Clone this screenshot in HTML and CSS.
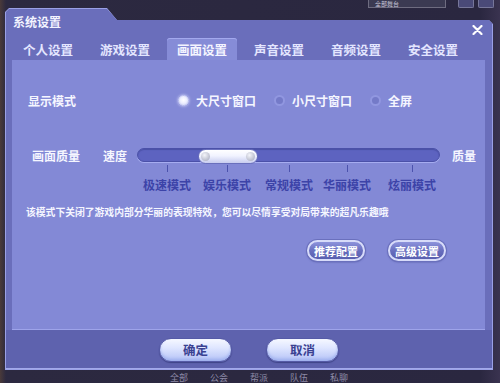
FILE: index.html
```html
<!DOCTYPE html>
<html lang="zh-CN">
  <head>
    <meta charset="UTF-8" />
    <meta name="viewport" content="width=device-width, initial-scale=1.0" />
    <title>系统设置</title>
    <link rel="stylesheet" href="styles.css">
  </head>
  <body>
    <div class="top-strip">
      <span class="stage-tag">全部舞台</span>
      <span class="corner-btn"></span>
      <span class="corner-btn"></span>
    </div>

    <div class="dialog-edge">
      <div class="dialog">
        <div class="title-bar">
          <span class="title">系统设置</span>
          <svg class="close" width="11" height="10" viewBox="0 0 11 10">
            <path d="M1.5 1 L9.5 9 M9.5 1 L1.5 9" stroke="#fff" stroke-width="2.2" stroke-linecap="round" />
          </svg>
        </div>

        <div class="tabs">
          <div class="tab">个人设置</div>
          <div class="tab">游戏设置</div>
          <div class="tab active">画面设置</div>
          <div class="tab">声音设置</div>
          <div class="tab">音频设置</div>
          <div class="tab">安全设置</div>
        </div>

        <!-- 画面设置 panel -->
        <div class="panel">
          <div class="row display-row">
            <span class="row-label">显示模式</span>
            <div class="radios">
              <label class="radio checked"><span class="dot"></span>大尺寸窗口</label>
              <label class="radio"><span class="dot"></span>小尺寸窗口</label>
              <label class="radio"><span class="dot"></span>全屏</label>
            </div>
          </div>

          <div class="row quality-row">
            <span class="row-label quality-label">画面质量</span>
            <span class="end-label">速度</span>
            <div class="track">
              <div class="thumb"><span class="knob"></span><span class="knob"></span></div>
            </div>
            <span class="end-label">质量</span>
          </div>

          <div class="marks">
            <div class="mark"><span class="tick"></span>极速模式</div>
            <div class="mark"><span class="tick"></span>娱乐模式</div>
            <div class="mark"><span class="tick"></span>常规模式</div>
            <div class="mark"><span class="tick"></span>华丽模式</div>
            <div class="mark"><span class="tick"></span>炫丽模式</div>
          </div>

          <p class="desc">该模式下关闭了游戏内部分华丽的表现特效，您可以尽情享受对局带来的超凡乐趣哦</p>

          <div class="panel-actions">
            <button class="btn-small">推荐配置</button>
            <button class="btn-small">高级设置</button>
          </div>
        </div>

        <div class="footer">
          <button class="btn-main">确定</button>
          <button class="btn-main">取消</button>
        </div>
      </div>
    </div>

    <div class="chat-tabs">
      <span>全部</span>
      <span>公会</span>
      <span>帮派</span>
      <span>队伍</span>
      <span>私聊</span>
    </div>
  </body>
</html>
```

FILE: styles.css
```css
body {
  margin: 0;
  width: 500px;
  height: 383px;
  overflow: hidden;
  background: linear-gradient(90deg, #4a3a3a 0, #2c2940 6px, #2a2740 480px, #3a3350 500px);
  font-family: "Noto Sans CJK SC", "Noto Sans", sans-serif;
}

/* game ui peeking above the dialog */
.top-strip {
  height: 8px;
  display: flex;
  justify-content: flex-end;
  gap: 4px;
  padding-right: 6px;
  overflow: hidden;
}

.stage-tag {
  width: 78px;
  height: 8px;
  margin-right: 8px;
  background: #3b3a52;
  border: 1px solid #6e6c80;
  border-top: none;
  color: #c9c6d8;
  font-size: 6px;
  line-height: 7px;
  padding-left: 6px;
  box-sizing: border-box;
}

.corner-btn {
  width: 16px;
  height: 8px;
  background: #4a4a78;
  border: 1px solid #77779a;
  border-top: none;
  border-radius: 0 0 2px 2px;
  box-sizing: border-box;
}

/* Dialog frame */
.dialog-edge {
  margin-left: 5px;
  width: 488px;
  height: 362px;
  padding: 1px;
  box-sizing: border-box;
  background: #9aa0e6;
  clip-path: polygon(0 4px, 4px 0, 102px 0, 112px 12px, calc(100% - 4px) 12px, 100% 16px, 100% 100%, 0 100%);
}

.dialog {
  height: 100%;
  display: flex;
  flex-direction: column;
  background: #6a6ebb;
  clip-path: polygon(0 3px, 3px 0, 101px 0, 111px 11px, calc(100% - 3px) 11px, 100% 14px, 100% 100%, 0 100%);
}

.title-bar {
  height: 29px;
  display: flex;
  justify-content: space-between;
  flex-shrink: 0;
}

.title {
  padding: 5px 0 0 7px;
  color: #f2f3ff;
  font-size: 12px;
  font-weight: 700;
  line-height: 16px;
}

.close {
  margin: 16px 9px 0 0;
}

.tabs {
  height: 22px;
  display: flex;
  gap: 7px;
  padding-left: 7px;
  flex-shrink: 0;
}

.tab {
  width: 70px;
  text-align: center;
  color: #e4e6ff;
  font-size: 12.5px;
  font-weight: 700;
  line-height: 24px;
  border-radius: 3px 3px 0 0;
}

.tab.active {
  background: #868cd7;
  box-shadow: inset 0 1px 0 #a3a9ee;
  color: #f4f5ff;
}

/* Content panel */
.panel {
  height: 270px;
  margin: 0 7px 0 6px;
  padding: 32px 0 0 16px;
  box-sizing: border-box;
  background: #8389d6;
  border-bottom: 1px solid #9ea4ea;
  flex-shrink: 0;
}

.row {
  height: 16px;
  display: flex;
  align-items: center;
}

.row-label {
  width: 150px;
  color: #f5f6ff;
  font-size: 12px;
  font-weight: 700;
}

.radios {
  display: flex;
  gap: 18px;
}

.radio {
  display: flex;
  align-items: center;
  gap: 5px;
  color: #f5f6ff;
  font-size: 12px;
  font-weight: 700;
}

.dot {
  width: 11px;
  height: 11px;
  border-radius: 50%;
  box-sizing: border-box;
  background: #747ac8;
  border: 2px solid #9197e0;
  margin-right: 2px;
}

.radio.checked .dot {
  background: radial-gradient(circle at 50% 45%, #ffffff 0, #eef0ff 45%, #c4c9f3 100%);
  border: 1px solid #c8ccf4;
  box-shadow: 0 0 3px #dfe2ff;
}

.quality-row {
  margin-top: 39px;
}

.quality-label {
  width: 71px;
  padding-left: 4px;
}

.end-label {
  width: 24px;
  color: #f5f6ff;
  font-size: 12px;
  font-weight: 700;
}

.track {
  position: relative;
  width: 303px;
  height: 14px;
  margin: 0 12px 0 10px;
  box-sizing: border-box;
  border-radius: 7px;
  background: #5d63c0;
  border: 1px solid #4b51a8;
  box-shadow: 0 1px 0 #a6acf0, inset 0 1px 1px #4a50a6;
}

.thumb {
  position: absolute;
  left: 60px;
  top: 0;
  width: 60px;
  height: 15px;
  box-sizing: border-box;
  border-radius: 8px;
  background: linear-gradient(#ffffff 0, #f1f3ff 45%, #c7ccef 100%);
  border: 1px solid #6a70bd;
  display: flex;
  justify-content: space-between;
  align-items: center;
  padding: 0 2px;
}

.knob {
  width: 9px;
  height: 9px;
  border-radius: 50%;
  background: radial-gradient(circle at 40% 35%, #f4f5fa 0, #b9bccc 70%, #9a9eb4 100%);
}

.marks {
  display: grid;
  grid-template-columns: 60px 60px 64px 52px 78px;
  margin: 2px 0 0 109px;
}

.mark {
  display: flex;
  flex-direction: column;
  align-items: center;
  white-space: nowrap;
  color: #3c43a8;
  font-size: 12px;
  font-weight: 700;
  line-height: 14px;
}

.tick {
  width: 1px;
  height: 7px;
  margin-bottom: 6px;
  background: #4b52ad;
}

.desc {
  margin: 13px 0 0 -2px;
  color: #f5f6ff;
  font-size: 9.8px;
  font-weight: 700;
  line-height: 14px;
  white-space: nowrap;
}

.panel-actions {
  display: flex;
  justify-content: flex-end;
  gap: 23px;
  margin: 21px 39px 0 0;
}

.btn-small {
  width: 58px;
  height: 21px;
  padding: 0;
  border-radius: 11px;
  border: 2px solid #d7dbf9;
  background: linear-gradient(#8d93dc, #666cbd 55%, #5a60b0);
  box-shadow: 0 0 0 1px #6a70bd, 0 1px 2px #4a4f9a;
  color: #ffffff;
  font-family: inherit;
  font-size: 11px;
  font-weight: 700;
  line-height: 16px;
}

/* Bottom bar */
.footer {
  flex: 1;
  display: flex;
  justify-content: center;
  gap: 34px;
  padding-top: 8px;
  background: #5e62ae;
  border-bottom: 1px solid #a3a9ea;
}

.btn-main {
  width: 73px;
  height: 24px;
  padding: 0;
  border-radius: 12px;
  border: 1px solid #555aa6;
  background: linear-gradient(#f6f8ff 0, #dfe6ff 40%, #b4c2f6 100%);
  box-shadow: inset 0 -2px 3px #9fb0ee, 0 1px 1px #3f4488;
  color: #3a4191;
  font-family: inherit;
  font-size: 12.5px;
  font-weight: 700;
  line-height: 20px;
}

.chat-tabs {
  display: flex;
  gap: 22px;
  padding: 2px 0 0 170px;
  color: #8d8aa6;
  font-size: 9px;
  line-height: 11px;
}
```
